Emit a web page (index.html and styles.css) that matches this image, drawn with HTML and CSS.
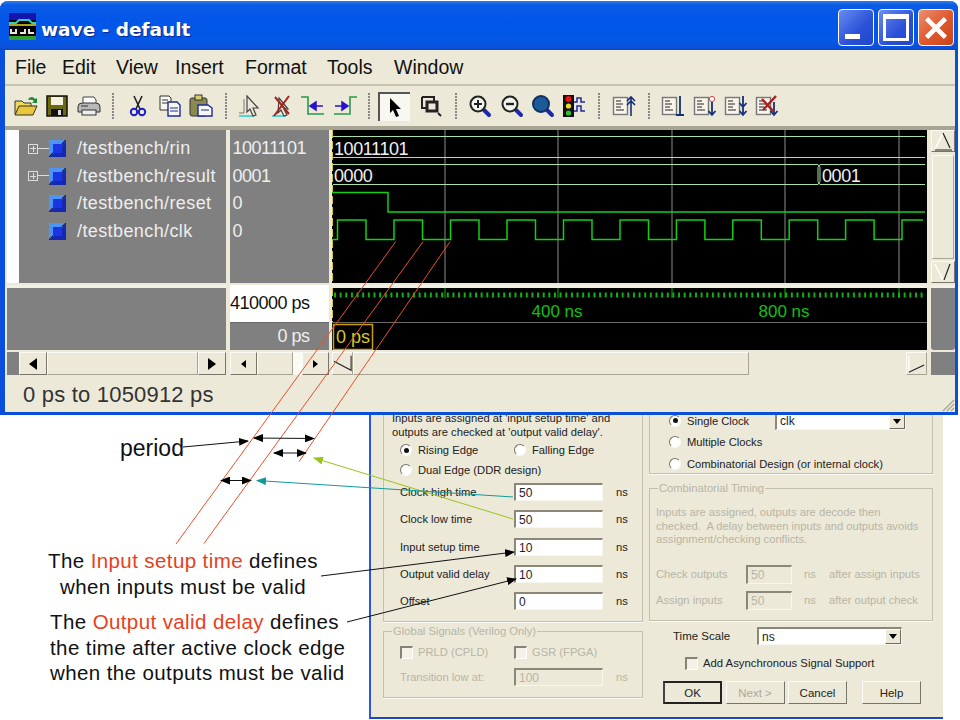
FILE: index.html
```html
<!DOCTYPE html>
<html lang="en">
<head>
    <meta charset="UTF-8">
    <title>wave - default</title>
    <link rel="stylesheet" href="styles.css">
</head>
<body>

<svg class="defs" width="0" height="0">
    <symbol id="lens" viewBox="0 0 24 24">
        <path d="M14 14l7 7" stroke="#1c2aa8" stroke-width="4" stroke-linecap="round"/>
        <circle cx="10" cy="10" r="7.5" fill="#f4f4ee" stroke="#222" stroke-width="2"/>
    </symbol>
    <symbol id="list" viewBox="0 0 24 24">
        <rect x="1.5" y="3.5" width="14" height="17" fill="#f7f5ea" stroke="#777" stroke-width="1.4"/>
        <path d="M4 7h5M4 10h7M4 13h5M4 16h8" stroke="#222" stroke-width="1.2"/>
    </symbol>
    <symbol id="sig" viewBox="0 0 17 17">
        <rect width="17" height="17" fill="#4f94f2"/>
        <path d="M17 1V17H1z" fill="#1428b4"/>
        <rect x="4" y="4" width="9" height="9" fill="#1a36e4"/>
        <path d="M0 17L4 13M13 4L17 0" stroke="#0c1650" stroke-width="1.2"/>
    </symbol>
    <marker id="head" viewBox="0 0 10 8" refX="9" refY="4" markerWidth="10" markerHeight="8" markerUnits="userSpaceOnUse" orient="auto-start-reverse">
        <path d="M0 0L10 4L0 8z" fill="#000"/>
    </marker>
    <marker id="head-lime" viewBox="0 0 10 8" refX="9" refY="4" markerWidth="10" markerHeight="8" markerUnits="userSpaceOnUse" orient="auto-start-reverse">
        <path d="M0 0L10 4L0 8z" fill="#9ac31c"/>
    </marker>
    <marker id="head-teal" viewBox="0 0 10 8" refX="9" refY="4" markerWidth="10" markerHeight="8" markerUnits="userSpaceOnUse" orient="auto-start-reverse">
        <path d="M0 0L10 4L0 8z" fill="#129a9a"/>
    </marker>
</svg>

<!-- dialog behind the wave window -->
<div class="dialog">
    <div class="dialog-col">
        <div class="group group-clock">
            <p class="hint">Inputs are assigned at 'input setup time' and<br>outputs are checked at 'output valid delay'.</p>
            <div class="radio-row">
                <span class="radio-item"><span class="radio on"></span>Rising Edge</span>
                <span class="radio-item"><span class="radio"></span>Falling Edge</span>
            </div>
            <div class="radio-row">
                <span class="radio-item"><span class="radio"></span>Dual Edge (DDR design)</span>
            </div>
            <div class="timing timing-clock">
                <span>Clock high time</span><span class="field">50</span><span class="unit">ns</span>
                <span>Clock low time</span><span class="field">50</span><span class="unit">ns</span>
                <span>Input setup time</span><span class="field">10</span><span class="unit">ns</span>
                <span>Output valid delay</span><span class="field">10</span><span class="unit">ns</span>
                <span>Offset</span><span class="field">0</span><span class="unit">ns</span>
            </div>
        </div>
        <fieldset class="group group-global off">
            <legend>Global Signals (Verilog Only)</legend>
            <div class="radio-row">
                <span class="radio-item"><span class="check"></span>PRLD (CPLD)</span>
                <span class="radio-item"><span class="check"></span>GSR (FPGA)</span>
            </div>
            <div class="timing">
                <span>Transition low at:</span><span class="field">100</span><span class="unit">ns</span>
            </div>
        </fieldset>
    </div>
    <div class="dialog-col">
        <div class="group group-mode">
            <div class="radio-row">
                <span class="radio-item mode-first"><span class="radio on"></span>Single Clock</span>
                <span class="select select-clk">clk<span class="drop"></span></span>
            </div>
            <div class="radio-row"><span class="radio-item"><span class="radio"></span>Multiple Clocks</span></div>
            <div class="radio-row"><span class="radio-item"><span class="radio"></span>Combinatorial Design (or internal clock)</span></div>
        </div>
        <fieldset class="group group-comb off">
            <legend>Combinatorial Timing</legend>
            <p class="hint">Inputs are assigned, outputs are decode then<br>checked.&nbsp; A delay between inputs and outputs avoids<br>assignment/checking conflicts.</p>
            <div class="comb-rows">
                <span>Check outputs</span><span class="field">50</span><span class="unit">ns</span><span>after assign inputs</span>
                <span>Assign inputs</span><span class="field">50</span><span class="unit">ns</span><span>after output check</span>
            </div>
        </fieldset>
        <div class="scale-row">
            <span class="scale-label">Time Scale</span>
            <span class="select select-scale">ns<span class="drop"></span></span>
        </div>
        <div class="async-row"><span class="check"></span>Add Asynchronous Signal Support</div>
        <div class="buttons">
            <span class="btn default">OK</span>
            <span class="btn disabled">Next &gt;</span>
            <span class="btn">Cancel</span>
            <span class="btn help">Help</span>
        </div>
    </div>
</div>

<!-- wave window -->
<div class="window">
    <div class="titlebar">
        <svg class="app-icon" width="27" height="27" viewBox="0 0 27 27">
            <rect width="27" height="27" fill="#000"/>
            <rect width="27" height="7" fill="#1414b0"/>
            <path d="M0 10h7l3-3h10l3 3h4" stroke="#2fd0c0" stroke-width="2" fill="none"/>
            <path d="M0 12h27" stroke="#e8d820" stroke-width="1.5"/>
            <path d="M2 16v4h5v-4M11 20h5v-4M20 16v4h5" stroke="#e8e8d0" stroke-width="2" fill="none"/>
            <rect y="23" width="27" height="4" fill="#30a030"/>
        </svg>
        <span class="title">wave - default</span>
        <span class="win-btn win-min"><i></i></span>
        <span class="win-btn win-max"><i></i></span>
        <span class="win-btn win-close">
            <svg width="36" height="36" viewBox="0 0 36 36"><path d="M8 8l20 20M28 8L8 28" stroke="#fff" stroke-width="5"/></svg>
        </span>
    </div>

    <div class="menubar">
        <span>File</span><span>Edit</span><span>View</span><span>Insert</span><span>Format</span><span>Tools</span><span>Window</span>
    </div>

    <div class="toolbar">
        <span class="tool"><svg viewBox="0 0 24 24"><path d="M1 20V7h7l2 2h7v3" fill="#f0d860" stroke="#333"/><path d="M1 21l4-9h18l-4 9z" fill="#e8c838" stroke="#333"/><path d="M14 5q4-4 7 0l2-1v5h-5l2-2q-2-2-5-1z" fill="#1c8a3a"/></svg></span>
        <span class="tool"><svg viewBox="0 0 24 24"><rect x="2" y="2" width="20" height="20" fill="#6a6a14" stroke="#111" stroke-width="1.5"/><rect x="6" y="3" width="12" height="8" fill="#f4f2dc"/><rect x="6" y="15" width="12" height="7" fill="#111"/><rect x="13" y="16" width="3" height="5" fill="#ddd"/></svg></span>
        <span class="tool"><svg viewBox="0 0 24 24"><path d="M6 10V3h11l2 3v4" fill="#fff" stroke="#444"/><path d="M1 13q0-4 4-4h14q4 0 4 4v5H1z" fill="#b8b8b8" stroke="#333"/><rect x="5" y="16" width="14" height="5" fill="#eee" stroke="#333"/><path d="M4 12h7" stroke="#333"/></svg></span>
        <span class="sep"></span>
        <span class="tool"><svg viewBox="0 0 24 24"><path d="M8 2l6 13M16 2l-6 13" stroke="#222" stroke-width="1.6"/><circle cx="8" cy="18" r="3.2" fill="none" stroke="#2020c0" stroke-width="2"/><circle cx="16" cy="18" r="3.2" fill="none" stroke="#2020c0" stroke-width="2"/></svg></span>
        <span class="tool"><svg viewBox="0 0 24 24"><path d="M2 2h9l2 2v12H2z" fill="#f8f8f0" stroke="#333"/><path d="M4 6h6M4 9h6" stroke="#333"/><path d="M10 8h9l3 3v11H10z" fill="#f8f8f0" stroke="#1c2aa0" stroke-width="1.4"/><path d="M12 14h8M12 17h8" stroke="#1c2aa0"/></svg></span>
        <span class="tool"><svg viewBox="0 0 24 24"><rect x="1" y="4" width="17" height="18" rx="2" fill="#8a8a50" stroke="#333"/><rect x="6" y="1" width="7" height="5" fill="#d8d070" stroke="#333"/><path d="M9 11h10l4 3v8H9z" fill="#f8f8f0" stroke="#1c2aa0" stroke-width="1.4"/><path d="M12 16h8" stroke="#1c2aa0"/></svg></span>
        <span class="sep"></span>
        <span class="tool"><svg viewBox="0 0 24 24"><path d="M1 22h14v-3" fill="none" stroke="#50d8d8" stroke-width="2"/><path d="M6 19V5M6 19H1" stroke="#777"/><path d="M9 2l11 12h-5l3 7-3 1-3-7-3 3z" fill="#ece9d8" stroke="#444" stroke-width="1.2"/></svg></span>
        <span class="tool"><svg viewBox="0 0 24 24"><path d="M2 22h14" stroke="#50d8d8" stroke-width="2"/><path d="M9 4l9 11h-4l3 6-3 1-3-6-3 3z" fill="#ece9d8" stroke="#444" stroke-width="1.2"/><path d="M4 22L19 2M5 3l14 17" stroke="#a82020" stroke-width="2"/></svg></span>
        <span class="tool"><svg viewBox="0 0 24 24"><path d="M0 3h7v17h16" fill="none" stroke="#2a9a4a" stroke-width="1.6"/><path d="M22 12H15V8l-6 4 6 4v-4" fill="#2a10d0" stroke="#2a10d0" stroke-width="1.5"/></svg></span>
        <span class="tool"><svg viewBox="0 0 24 24"><path d="M24 3h-7v17H1" fill="none" stroke="#2a9a4a" stroke-width="1.6"/><path d="M2 12h7V8l6 4-6 4v-4" fill="#2a10d0" stroke="#2a10d0" stroke-width="1.5"/></svg></span>
        <span class="sep"></span>
        <span class="tool tool-on"><svg viewBox="0 0 24 24"><path d="M7 3l11 11h-5l3 7-3 1-3-7-3 3z" fill="#000"/></svg></span>
        <span class="tool tool-wide"><svg viewBox="0 0 24 24"><path d="M3 3h12v4M3 3v11h4" fill="none" stroke="#222" stroke-width="2"/><rect x="8" y="8" width="10" height="9" fill="none" stroke="#222" stroke-width="3"/><path d="M19 19l3 3" stroke="#222" stroke-width="2"/></svg></span>
        <span class="sep"></span>
        <span class="tool"><svg viewBox="0 0 24 24"><use href="#lens"/><path d="M6 10h8M10 6v8" stroke="#222" stroke-width="2"/></svg></span>
        <span class="tool"><svg viewBox="0 0 24 24"><use href="#lens"/><path d="M6 10h8" stroke="#222" stroke-width="2.4"/></svg></span>
        <span class="tool"><svg viewBox="0 0 24 24"><path d="M14 14l7 7" stroke="#1c2aa8" stroke-width="4" stroke-linecap="round"/><circle cx="10" cy="10" r="8" fill="#1c5a9a" stroke="#103060" stroke-width="2"/></svg></span>
        <span class="tool"><svg viewBox="0 0 24 24"><rect x="1" y="1" width="11" height="22" fill="#111"/><circle cx="6.5" cy="5" r="3" fill="#f01010"/><circle cx="6.5" cy="12" r="2.6" fill="#e8e020"/><circle cx="6.5" cy="19" r="2.6" fill="#30c030"/><path d="M12 8h3V4h4v4h4M12 17h3v-5h4v5h4" fill="none" stroke="#1c2aa8" stroke-width="1.5"/></svg></span>
        <span class="sep"></span>
        <span class="tool"><svg viewBox="0 0 24 24"><use href="#list"/><path d="M19 22V3M15 7l4-4 4 4M15 11l4-4 4 4" fill="none" stroke="#16307a" stroke-width="1.6"/></svg></span>
        <span class="sep"></span>
        <span class="tool"><svg viewBox="0 0 24 24"><use href="#list"/><path d="M19 2v19M15 21h8" stroke="#16307a" stroke-width="1.8"/></svg></span>
        <span class="tool"><svg viewBox="0 0 24 24"><use href="#list"/><path d="M19 8v13M15.5 17l3.5 4 3.5-4" fill="none" stroke="#16307a" stroke-width="1.8"/><circle cx="19" cy="5" r="2.6" fill="#fff" stroke="#e04040"/></svg></span>
        <span class="tool"><svg viewBox="0 0 24 24"><use href="#list"/><path d="M19 2v19M15.5 9l3.5 4 3.5-4M15.5 17l3.5 4 3.5-4" fill="none" stroke="#16307a" stroke-width="1.8"/></svg></span>
        <span class="tool"><svg viewBox="0 0 24 24"><use href="#list"/><path d="M19 8v13M15.5 17l3.5 4 3.5-4" fill="none" stroke="#16307a" stroke-width="1.8"/><path d="M8 16L21 2M7 5l12 13" stroke="#a82020" stroke-width="2.4"/></svg></span>
    </div>

    <div class="panes">
        <div class="names">
            <div class="names-list">
                <div class="signal"><span class="tree"><i class="plus"></i></span><svg class="sig-icon"><use href="#sig"/></svg>/testbench/rin</div>
                <div class="signal"><span class="tree"><i class="plus"></i></span><svg class="sig-icon"><use href="#sig"/></svg>/testbench/result</div>
                <div class="signal"><span class="tree"></span><svg class="sig-icon"><use href="#sig"/></svg>/testbench/reset</div>
                <div class="signal"><span class="tree"></span><svg class="sig-icon"><use href="#sig"/></svg>/testbench/clk</div>
            </div>
        </div>
        <div class="values">
            <div class="value">10011101</div>
            <div class="value">0001</div>
            <div class="value">0</div>
            <div class="value">0</div>
        </div>
        <svg class="waves" viewBox="332 130 595 153">
            <path class="grid" d="M445 130v153M558 130v153M672 130v153M785 130v153M899 130v153"/>
            <path class="cursor-line" d="M332.5 130v153"/>
            <path class="bus" d="M333 136.5h592M333 157.5h592M333 164.500h485M333 184.500h485M820 164.500h105M820 184.500h105M818 164.500l2 3v14l-2 3M820 164.500l-2 3v14l2 3"/>
            <text class="bus-text" x="334" y="155">10011101</text>
            <text class="bus-text" x="334" y="182">0000</text>
            <text class="bus-text" x="822" y="182">0001</text>
            <path class="sig" d="M332 192.500h56v19.500h537"/>
            <path class="sig" d="M332 239.500h5.500v-19.500h28.500v19.500h28v-19.500h28.500v19.500h28v-19.500h28.500v19.500h28v-19.500h28.500v19.500h28v-19.500h28.500v19.500h28v-19.500h28.500v19.500h27.900v-19.500h28.500v19.500h27.900v-19.500h28.500v19.500h27.900v-19.500h28.500v19.500h27.900v-19.500h28.500v19.500h27.900v-19.500h21"/>
        </svg>
        <div class="vscroll">
            <span class="sb-btn sb-btn-v"><svg width="22" height="22" viewBox="0 0 22 22"><path d="M11 3L3 19" stroke="#fff" stroke-width="1.5"/><path d="M11 3l7 15M3 20h17" stroke="#222" stroke-width="1.2" fill="none"/></svg></span>
            <span class="sb-thumb"></span>
            <span class="sb-btn sb-btn-v"><svg width="22" height="22" viewBox="0 0 22 22"><path d="M3 3l8 16" stroke="#fff" stroke-width="1.5"/><path d="M18 3l-6 16" stroke="#222" stroke-width="1.2" fill="none"/></svg></span>
        </div>

        <div class="names-foot"></div>
        <div class="values-foot">
            <div class="now">410000 ps</div>
            <div class="cursor-val">0 ps</div>
        </div>
        <svg class="ruler" viewBox="332 286 595 62">
            <path class="ticks" d="M334 293h592"/>
            <path class="major" d="M558 286v10M672 286v10M785 286v10M899 286v10M445 286v10"/>
            <path class="rule" d="M332 320.500h595"/>
            <path class="cursor-line" d="M332.500 286v34"/>
            <text class="ruler-text" x="557" y="317" text-anchor="middle">400 ns</text>
            <text class="ruler-text" x="784" y="317" text-anchor="middle">800 ns</text>
            <rect class="cursor-box" x="333.500" y="322.500" width="39" height="25"/>
            <text class="cursor-text" x="336" y="341">0 ps</text>
        </svg>
        <div class="vscroll-foot"></div>

        <div class="hbar hbar-names">
            <span class="sb-btn sb-left"><i class="tri tri-l"></i></span>
            <span class="sb-thumb"></span>
            <span class="sb-btn sb-right"><i class="tri tri-r"></i></span>
        </div>
        <div class="hbar hbar-values">
            <span class="sb-btn sb-small"><i class="tri tri-l tri-s"></i></span>
            <span class="sb-thumb"></span>
            <span class="sb-gap"></span>
            <span class="sb-btn sb-small"><i class="tri tri-r tri-s"></i></span>
        </div>
        <div class="hbar hbar-wave">
            <span class="sb-btn sb-wave"><svg width="21" height="22" viewBox="0 0 21 22"><path d="M1 8l19 10V2" fill="none" stroke="#222" stroke-width="1.2"/></svg></span>
            <span class="sb-thumb sb-thumb-wave"></span>
            <span class="sb-rest"></span>
            <span class="sb-btn sb-wave"><svg width="21" height="22" viewBox="0 0 21 22"><path d="M2 2v18" stroke="#fff" stroke-width="1.5"/><path d="M2 20l17-8" stroke="#222" stroke-width="1.2"/></svg></span>
        </div>
        <div class="vscroll-corner"></div>
    </div>

    <div class="statusbar">0 ps to 1050912 ps
        <svg class="grip" width="14" height="14" viewBox="0 0 14 14"><path d="M13 2L2 13M13 6l-7 7M13 10l-3 3" stroke="#a8a494" stroke-width="1.2"/></svg>
    </div>
</div>

<!-- notes and arrows drawn over both windows -->
<div class="note note-period">period</div>
<div class="note note-input">The <em>Input setup time</em> defines<br>when inputs must be valid</div>
<div class="note note-output">The <em>Output valid delay</em> defines<br>the time after active clock edge<br>when the outputs must be valid</div>

<svg class="overlay" width="960" height="720" viewBox="0 0 960 720">
    <path class="red" d="M395.700 241.700L176 544M423 241.700L204 543.500M450 241.700L299 461.700"/>
    <path class="arrow" d="M183 447L248 441" marker-end="url(#head)"/>
    <path class="arrow" d="M254 438L314 438.500" marker-start="url(#head)" marker-end="url(#head)"/>
    <path class="arrow" d="M274 453L306 453" marker-start="url(#head)" marker-end="url(#head)"/>
    <path class="arrow" d="M221 480.500L251 480.500" marker-start="url(#head)" marker-end="url(#head)"/>
    <path class="arrow-lime" d="M513 519L314 458" marker-end="url(#head-lime)"/>
    <path class="arrow-teal" d="M513 497L257 480.500" marker-end="url(#head-teal)"/>
    <path class="arrow" d="M321 576L514 552" marker-end="url(#head)"/>
    <path class="arrow" d="M347 622L516 579" marker-end="url(#head)"/>
</svg>

</body>
</html>
```

FILE: styles.css
```css
* {
    box-sizing: border-box;
}
body {
    margin: 0;
    width: 960px;
    height: 720px;
    overflow: hidden;
    position: relative;
    background-color: #fff;
    font-family: "Liberation Sans", Arial, sans-serif;
}
.defs {
    display: block;
    height: 0;
    position: absolute;
}

/* dialog */
.dialog {
    position: absolute;
    left: 369px;
    top: 396px;
    width: 574px;
    height: 323px;
    padding: 1px 0 0 12px;
    display: grid;
    grid-template-columns: 260px 284px;
    column-gap: 6px;
    align-items: start;
    background-color: #ece9d8;
    border-left: 2px solid #2a58d8;
    border-bottom: 2px solid #1c46c8;
    font-size: 11.200px;
    color: #222;
}
.group {
    margin: 0;
    border: 1px solid #c4c0b0;
    box-shadow: 0 1px 0 #fbfaf4;
    padding: 0;
}
.group legend {
    margin-left: 0;
    padding: 0 1px;
    line-height: 13px;
}
.off {
    color: #b8b5a6;
}
.hint {
    margin: 0;
    line-height: 13.500px;
}
.group-clock {
    height: 225px;
    padding: 14px 0 0 8px;
}
.radio-row {
    display: flex;
    align-items: center;
    height: 20px;
    margin-left: 8px;
}
.group-clock .hint + .radio-row {
    margin-top: 1px;
}
.radio-item {
    width: 114px;
    flex: none;
    display: flex;
    align-items: center;
    white-space: nowrap;
}
.group-clock .radio-row:nth-child(3) .radio-item {
    width: auto;
}
.radio {
    width: 12px;
    height: 12px;
    margin-right: 6px;
    border-radius: 50%;
    background-color: #fff;
    border: 1px solid #fbfaf4;
    border-top-color: #77746a;
    border-left-color: #77746a;
    display: flex;
    align-items: center;
    justify-content: center;
    flex: none;
}
.radio.on::after {
    content: "";
    width: 5px;
    height: 5px;
    border-radius: 50%;
    background-color: #111;
}
.check {
    width: 13px;
    height: 13px;
    margin-right: 5px;
    flex: none;
    background-color: #f4f2e6;
    border: 1px solid #fff;
    border-top: 2px solid #85827a;
    border-left: 2px solid #85827a;
}
.timing {
    display: grid;
    grid-template-columns: 114px 89px auto;
    grid-auto-rows: 19px;
    margin: 4px 0 0 8px;
    align-items: start;
    line-height: 18px;
}
.timing-clock {
    grid-template-rows: 27px 28px 27px 27px 18px;
    margin-top: 3px;
}
.field {
    display: flex;
    align-items: center;
    height: 18px;
    padding-left: 3px;
    font-size: 12px;
    background-color: #fff;
    border: 1px solid #f8f7ee;
    border-top: 2px solid #8b887a;
    border-left: 2px solid #8b887a;
}
.off .field {
    background-color: #ece9d8;
}
.unit {
    margin-left: 13px;
}
.group-global {
    margin-top: 3px;
    height: 73px;
    padding: 4px 0 0 8px;
}
.group-global .timing {
    margin-top: 6px;
}
.group-mode {
    height: 77px;
    padding-top: 12px;
    padding-left: 11px;
}
.group-mode .radio-row {
    height: 21.500px;
}
.group-mode .radio-row:nth-child(3) .radio-item {
    width: auto;
}
.mode-first {
    width: 106px;
}
.select {
    height: 18px;
    padding-left: 3px;
    display: flex;
    align-items: center;
    justify-content: space-between;
    font-size: 12px;
    background-color: #fff;
    border: 1px solid #f8f7ee;
    border-top: 2px solid #8b887a;
    border-left: 2px solid #8b887a;
}
.select-clk {
    width: 131px;
}
.select-scale {
    width: 145px;
}
.drop {
    width: 16px;
    height: 15px;
    background-color: #ece9d8;
    border: 1px solid;
    border-color: #fff #6e6c62 #6e6c62 #fff;
    position: relative;
}
.drop::after {
    content: "";
    position: absolute;
    left: 3px;
    top: 4px;
    border: 4px solid transparent;
    border-top: 5px solid #000;
    border-bottom: 0;
}
.group-comb {
    margin-top: 8px;
    height: 139px;
    padding: 11px 4px 0 6px;
}
.group-comb legend {
    margin-left: 2px;
}
.comb-rows {
    display: grid;
    grid-template-columns: 90px 46px 37px auto;
    grid-auto-rows: 19px;
    row-gap: 7px;
    margin-top: 18px;
    align-items: center;
    white-space: nowrap;
}
.comb-rows .field {
    height: 19px;
}
.comb-rows .unit {
    margin-left: 12px;
}
.scale-row {
    display: flex;
    align-items: center;
    margin: 6px 0 0 24px;
}
.scale-label {
    width: 84px;
    font-size: 11.500px;
}
.async-row {
    display: flex;
    align-items: center;
    height: 24px;
    margin: 6px 0 0 36px;
    font-size: 11.300px;
}
.buttons {
    display: flex;
    gap: 3.500px;
    width: 258px;
    margin: 6px 0 0 14px;
}
.btn {
    width: 59px;
    height: 23px;
    display: flex;
    align-items: center;
    justify-content: center;
    font-size: 11.500px;
    border: 1px solid;
    border-color: #fbfaf4 #77746a #77746a #fbfaf4;
}
.btn.default {
    border: 2px solid #222;
    border-left-color: #444;
}
.btn.disabled {
    color: #aca899;
}
.btn.help {
    margin-left: auto;
}

/* wave window */
.window {
    position: absolute;
    left: 0;
    top: 1px;
    width: 958px;
    height: 414px;
    display: flex;
    flex-direction: column;
    background-color: #ece9d8;
    border: 0 solid #0a4fdc;
    border-width: 0 3px 3px 5px;
    border-radius: 8px 8px 0 0;
}
.titlebar {
    height: 49px;
    flex: none;
    margin: 0 -3px 0 -5px;
    padding: 4px 3px 0 9px;
    display: flex;
    align-items: center;
    border-radius: 8px 8px 0 0;
    background: linear-gradient(#2f7cea 0, #0a5be4 4px, #0256e8 20px, #0458e8 38px, #0a50d8 47px, #0a44c4 100%);
}
.app-icon {
    flex: none;
    margin-top: -2px;
}
.title {
    margin: 4px 0 0 5px;
    flex: 1;
    font-family: "DejaVu Sans", Verdana, sans-serif;
    font-weight: bold;
    font-size: 18.500px;
    color: #fff;
    text-shadow: 1px 1px 1px #0a2a90;
}
.win-btn {
    width: 36px;
    height: 37px;
    margin-left: 4px;
    border: 1px solid #fff;
    border-radius: 4px;
    background: linear-gradient(135deg, #6a8cf0, #2a50d8 60%, #2048c8);
    display: flex;
    align-items: center;
    justify-content: center;
    overflow: hidden;
    position: relative;
}
.win-btn:last-child {
    margin-right: 1px;
}
.win-min i {
    position: absolute;
    left: 6px;
    bottom: 6px;
    width: 15px;
    height: 5px;
    background-color: #fff;
}
.win-max i {
    width: 26px;
    height: 27px;
    border: 3px solid #fff;
    border-top-width: 5px;
}
.win-close {
    background: linear-gradient(135deg, #ec9070, #e05a30 50%, #c84418);
}
.menubar {
    height: 34px;
    flex: none;
    display: flex;
    align-items: center;
    padding: 0 0 0 10px;
    font-size: 19.500px;
    color: #111;
}
.menubar span:nth-child(1) { width: 47px; }
.menubar span:nth-child(2) { width: 54px; }
.menubar span:nth-child(3) { width: 59px; }
.menubar span:nth-child(4) { width: 70px; }
.menubar span:nth-child(5) { width: 82px; }
.menubar span:nth-child(6) { width: 67px; }
.toolbar {
    height: 46px;
    flex: none;
    padding-left: 5.300px;
    display: flex;
    align-items: center;
    border-top: 2px solid #c8c4b4;
    border-bottom: 4px solid #a8a494;
}
.tool {
    width: 31.400px;
    height: 24px;
    flex: none;
    display: flex;
    align-items: center;
    justify-content: center;
}
.tool svg {
    width: 24px;
    height: 24px;
}
.tool-on {
    width: 31.400px;
    height: 29px;
    background-color: #f8f7f0;
    border-top: 2px solid #555;
    border-left: 2px solid #555;
}
.tool-wide {
    margin-left: 5.600px;
}
.sep {
    width: 18px;
    height: 27px;
    flex: none;
    background: repeating-linear-gradient(#888 0 2px, transparent 2px 3px) center / 2px 100% no-repeat;
}

/* panes */
.panes {
    flex: none;
    margin-left: 2px;
    display: grid;
    grid-template-columns: 219px 99px 595px 24px;
    grid-template-rows: 153px 65px 23px;
    column-gap: 3.500px;
    row-gap: 2px;
}
.names {
    background-color: #808080;
    border-left: 12px solid #fff;
}
.names-list {
    padding-top: 5.300px;
}
.signal, .value {
    height: 27.400px;
    display: flex;
    align-items: center;
    color: #eee;
    white-space: nowrap;
}
.signal {
    font-size: 18px;
    letter-spacing: 0.400px;
}
.value {
    font-size: 18px;
    letter-spacing: -0.500px;
}
.tree {
    width: 30px;
    height: 100%;
    flex: none;
    display: flex;
    align-items: center;
    padding-left: 9px;
}
.plus {
    width: 10px;
    height: 10px;
    border: 1px solid #ddd;
    background:
        linear-gradient(#ddd, #ddd) center / 6px 1px no-repeat,
        linear-gradient(#ddd, #ddd) center / 1px 6px no-repeat;
    position: relative;
}
.plus::after {
    content: "";
    position: absolute;
    left: 9px;
    top: 3px;
    width: 11px;
    height: 1px;
    background-color: #ddd;
}
.sig-icon {
    width: 17px;
    height: 17px;
    flex: none;
    margin-right: 11px;
}
.values {
    background-color: #808080;
    padding: 5.300px 0 0 3px;
}
.waves, .ruler {
    display: block;
    width: 595px;
    background-color: #000;
}
.waves {
    height: 153px;
}
.ruler {
    height: 65px;
    border-top: 3px solid #f0efe8;
}
.grid {
    stroke: #8c8c8c;
    fill: none;
}
.cursor-line {
    stroke: #d8c820;
    stroke-dasharray: 8 3;
}
.bus {
    stroke: #a8e0a8;
    fill: none;
}
.sig {
    stroke: #12d012;
    stroke-width: 1.500;
    fill: none;
}
.bus-text {
    fill: #f0f0f0;
    font-size: 18px;
    letter-spacing: -0.400px;
}
.ticks {
    stroke: #10b010;
    stroke-width: 5;
    stroke-dasharray: 2 3.640;
}
.major {
    stroke: #10b010;
}
.rule {
    stroke: #6a6a6a;
}
.ruler-text {
    fill: #10c010;
    font-size: 17px;
    transform: translateY(-2px);
}
.cursor-box {
    stroke: #c8a010;
    fill: none;
    stroke-width: 1.500;
}
.cursor-text {
    fill: #d8c820;
    font-size: 18px;
}
.vscroll {
    display: flex;
    flex-direction: column;
    background-color: #ece9d8;
}
.sb-btn-v {
    height: 22px;
    flex: none;
}
.vscroll .sb-thumb {
    flex: 1;
    margin: 3px 1px 2px 1px;
}
.sb-thumb {
    background-color: #ece9d8;
    border: 1px solid;
    border-color: #fbfaf4 #a8a494 #a8a494 #fbfaf4;
}
.names-foot, .vscroll-foot, .vscroll-corner {
    background-color: #808080;
}
.names-foot {
    border-top: 3px solid #f0efe8;
}
.vscroll-foot {
    border-top: 3px solid #f0efe8;
    border-radius: 0 0 3px 3px;
}
.values-foot {
    display: flex;
    flex-direction: column;
    background-color: #808080;
    font-size: 18px;
    letter-spacing: -0.500px;
}
.now, .cursor-val {
    padding-right: 19px;
    white-space: nowrap;
    display: flex;
    justify-content: flex-end;
    align-items: center;
}
.now {
    height: 37px;
    background-color: #fff;
    color: #111;
}
.cursor-val {
    flex: 1;
    color: #eee;
    border-top: 1px solid #6a6a6a;
}
.hbar {
    display: flex;
    background-color: #808080;
}
.hbar-names {
    padding-left: 12px;
}
.hbar-names .sb-thumb {
    flex: 1;
}
.hbar-values, .hbar-wave {
    background-color: #ece9d8;
}
.hbar-values .sb-thumb {
    width: 36px;
}
.sb-gap {
    flex: 1;
    background-color: #fbfaf4;
}
.sb-btn {
    display: flex;
    align-items: center;
    justify-content: center;
    background-color: #ece9d8;
    border: 1px solid;
    border-color: #fbfaf4 #77746a #77746a #fbfaf4;
    flex: none;
}
.sb-left, .sb-right {
    width: 28px;
}
.sb-small {
    width: 27px;
}
.sb-wave {
    width: 21px;
    border-color: #fbfaf4 #a8a494 #a8a494 #fbfaf4;
}
.sb-thumb-wave {
    width: 396px;
}
.sb-rest {
    flex: 1;
}
.tri {
    width: 0;
    height: 0;
    border: 6px solid transparent;
}
.tri-l {
    border-left: 0;
    border-right: 8px solid #000;
}
.tri-r {
    border-right: 0;
    border-left: 8px solid #000;
}
.tri-s {
    border-top-width: 4px;
    border-bottom-width: 4px;
}
.tri-s.tri-l {
    border-right-width: 5px;
}
.tri-s.tri-r {
    border-left-width: 5px;
}

/* status bar */
.statusbar {
    flex: 1;
    margin-top: 2px;
    padding-left: 18px;
    display: flex;
    align-items: center;
    justify-content: space-between;
    font-size: 22px;
    letter-spacing: 0.200px;
    color: #333;
}
.grip {
    align-self: flex-end;
}

/* notes */
.note {
    position: absolute;
    color: #111;
    white-space: nowrap;
    font-size: 20.500px;
    letter-spacing: 0.400px;
    line-height: 25.500px;
}
.note em {
    font-style: normal;
    color: #e8401c;
}
.note-period {
    left: 120px;
    top: 436px;
    font-size: 23px;
    letter-spacing: 0;
}
.note-input {
    left: 33px;
    top: 548px;
    width: 300px;
    text-align: center;
}
.note-output {
    left: 50px;
    top: 609px;
}
.overlay {
    position: absolute;
    left: 0;
    top: 0;
}
.overlay path {
    fill: none;
}
.red {
    stroke: #e8502c;
}
.arrow {
    stroke: #111;
}
.arrow-lime {
    stroke: #9ac31c;
}
.arrow-teal {
    stroke: #129a9a;
}
```
